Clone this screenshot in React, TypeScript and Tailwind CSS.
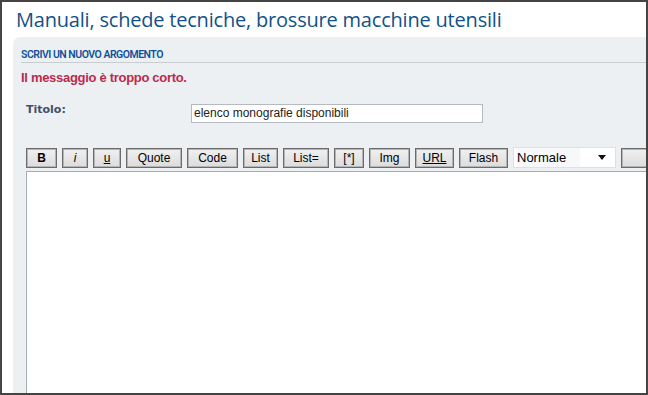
import React from "react";

const buttons = [
  { label: "B", w: "w-[31px]", cls: "font-bold" },
  { label: "i", w: "w-[26px]", cls: "italic" },
  { label: "u", w: "w-[28px]", cls: "" },
  { label: "Quote", w: "w-[56px]", cls: "" },
  { label: "Code", w: "w-[51px]", cls: "" },
  { label: "List", w: "w-[35px]", cls: "" },
  { label: "List=", w: "w-[46px]", cls: "" },
  { label: "[*]", w: "w-[30px]", cls: "" },
  { label: "Img", w: "w-[41px]", cls: "" },
  { label: "URL", w: "w-[39px]", cls: "underline" },
  { label: "Flash", w: "w-[49px]", cls: "" },
];

function ToolButton({ label, w, cls }: { label: string; w: string; cls: string }) {
  return (
    <button
      className={`${w} h-[20px] shrink-0 border border-[#6b6b6b] shadow-[inset_0_0_0_1px_#b5b5b5] bg-linear-to-b from-[#f0f0f0] to-[#dcdcdc] text-[12px] leading-[18px] text-black font-['Liberation_Sans',sans-serif] ${cls}`}
    >
      {label === "u" ? <span className="underline">u</span> : label}
    </button>
  );
}

export default function App() {
  return (
    <div className="w-[648px] h-[395px] border-2 border-[#444] bg-white overflow-hidden font-['Liberation_Sans',sans-serif]">
      <h2 className="pl-[14px] pt-[5px] text-[20px] leading-[26px] text-[#105289] font-['Open_Sans',sans-serif] tracking-[-0.2px]">
        Manuali, schede tecniche, brossure macchine utensili
      </h2>

      {/* posting panel */}
      <div className="ml-[11px] mt-[4px] w-[700px] h-[400px] rounded-tl-[7px] bg-[#ECF0F3] pl-2 pt-[12px]">
        <div className="h-[14px] border-b border-[#c8cdd2] text-[10.5px] leading-[12px] font-semibold text-[#115098] font-['Roboto',sans-serif] tracking-[-0.5px]">
          SCRIVI UN NUOVO ARGOMENTO
        </div>

        <p className="mt-[6px] h-[18px] text-[13px] leading-[18px] font-bold text-[#BC2A4D] font-['Liberation_Sans',sans-serif] tracking-[-0.3px]">
          Il messaggio è troppo corto.
        </p>

        <div className="mt-[17px] flex items-start pl-[5px]">
          <label className="w-[165px] text-[11px] leading-[12px] font-bold text-[#425067] font-['DejaVu_Sans',sans-serif]">
            Titolo:
          </label>
          <div className="w-[292px] h-[19px] border border-[#b4bac0] bg-white pl-[2px] text-[12px] leading-[17px] text-[#222]">
            elenco monografie disponibili
          </div>
        </div>

        <div className="mt-[24px] flex items-center gap-[5px] pl-[5px]">
          {buttons.map((b) => (
            <ToolButton key={b.label} {...b} />
          ))}
          <div className="w-[103px] h-[21px] shrink-0 border border-[#dde1e5] bg-white flex items-center justify-between pl-[3px] pr-[9px] text-[13px] text-black">
            <span className="bg-[#f7f8f9] pr-[14px]">Normale</span>
            <svg width="8" height="5" viewBox="0 0 8 5">
              <path d="M0 0h8L4 5z" fill="#111" />
            </svg>
          </div>
          <ToolButton label="" w="w-[40px]" cls="" />
        </div>

        <div className="mt-[3px] ml-[5px] h-[300px] border border-[#a5acb5] bg-white" />
      </div>
    </div>
  );
}
